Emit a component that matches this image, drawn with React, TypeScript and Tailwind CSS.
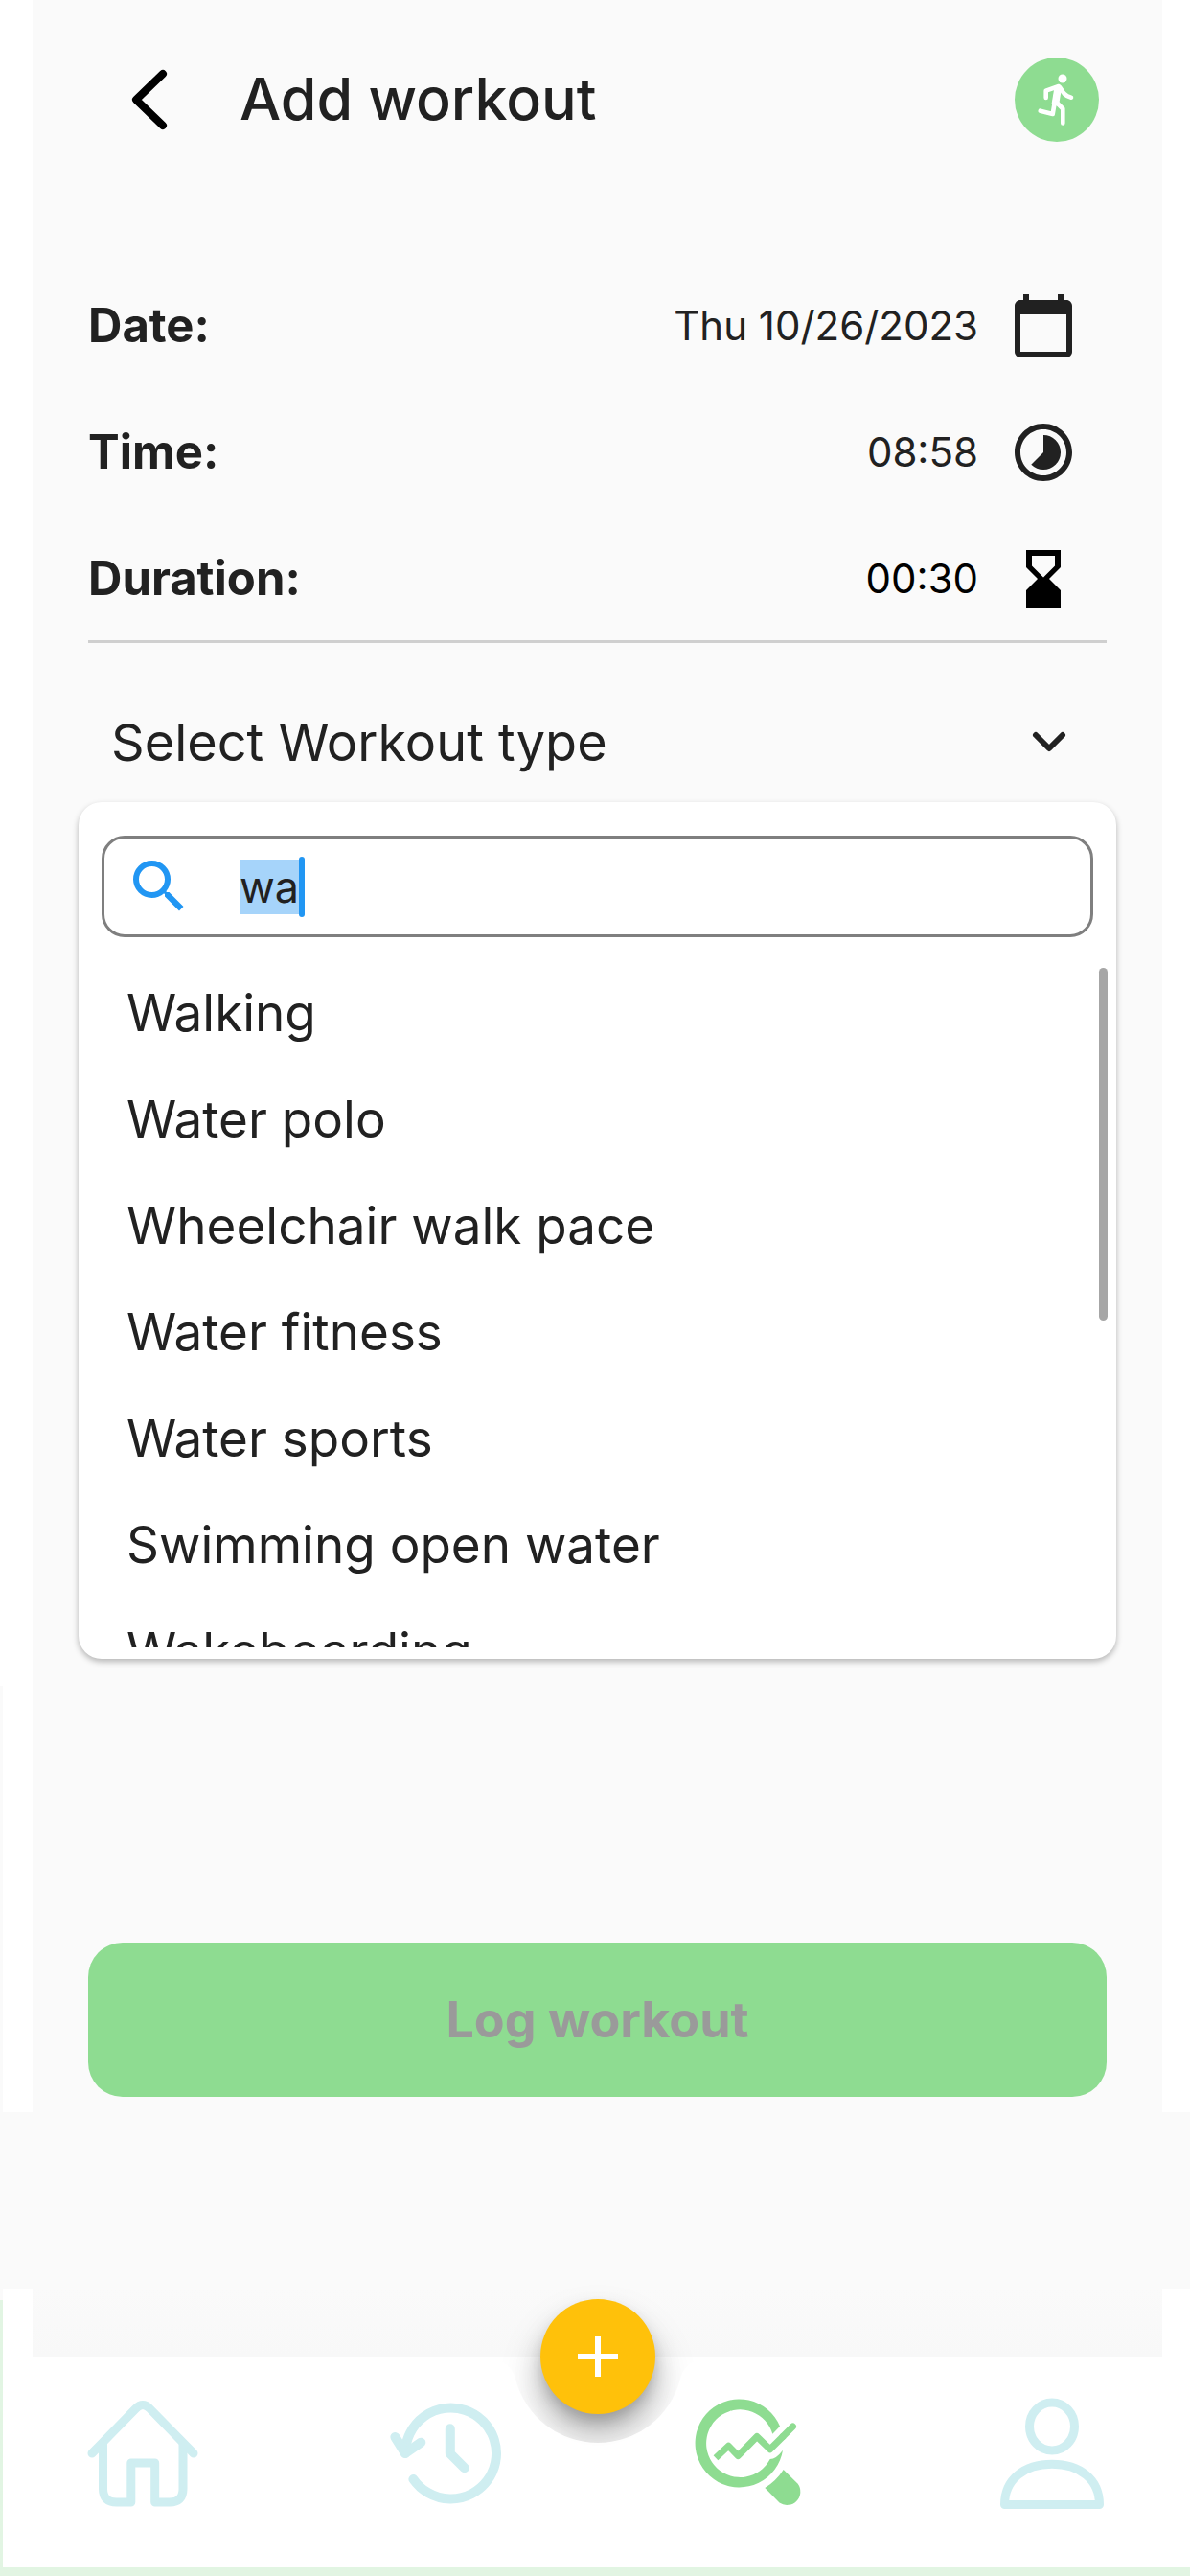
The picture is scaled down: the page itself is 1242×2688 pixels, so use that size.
import React, { useEffect, useRef } from "react";
import {
  MdAdd,
  MdCalendarToday,
  MdHourglassBottom,
  MdSearch,
  MdTimelapse,
} from "react-icons/md";

const workouts = [
  "Walking",
  "Water polo",
  "Wheelchair walk pace",
  "Water fitness",
  "Water sports",
  "Swimming open water",
  "Wakeboarding",
];

interface FieldRowProps {
  label: string;
  value: string;
  icon: React.ReactNode;
  className?: string;
}

const FieldRow: React.FC<FieldRowProps> = ({ label, value, icon, className = "" }) => (
  <div className="flex h-[72px] items-center justify-between pr-[30px]">
    <span className="text-[49px] font-bold">{label}</span>
    <button
      type="button"
      aria-label={`${label} ${value}`}
      className={`flex items-center gap-8 text-[42px] leading-[48px] ${className}`}
    >
      {value}
      {icon}
    </button>
  </div>
);

const BackIcon = () => (
  <svg viewBox="0 0 72 72" className="size-[72px]" fill="none" stroke="#000" strokeWidth="8" strokeLinecap="round" strokeLinejoin="round">
    <path d="M52 9L24 36l28 27" />
  </svg>
);

const ChevronIcon = () => (
  <svg viewBox="0 0 72 72" className="size-[72px]" fill="none" stroke="#212121" strokeWidth="6" strokeLinecap="round" strokeLinejoin="round">
    <path d="M22 29l14 14 14-14" />
  </svg>
);

const RunnerIcon = () => (
  <svg viewBox="0 0 88 88" className="size-[88px]" fill="none" stroke="#fff" strokeWidth="4.6" strokeLinecap="round" strokeLinejoin="round">
    <circle cx="50" cy="22" r="4.5" fill="#fff" stroke="none" />
    <path d="M32.7 42v-7.3L46 30c2 1 3 5 6 8 2 2 4 3 7 3.7" />
    <path d="M44.5 31L39.7 59l-13-3.3" />
    <path d="M43.5 33h3l-2.5 15h-3z" fill="#fff" />
    <path d="M43.3 46.5l7 7v15" />
  </svg>
);

const HomeIcon = () => (
  <svg viewBox="0 0 120 120" className="size-[120px]" fill="none" stroke="#cfeef1" strokeWidth="9" strokeLinecap="round" strokeLinejoin="round">
    <path d="M6 60L51.5 13.5Q59 5.7 66.5 13.5L112 60" />
    <path d="M17.5 50v47q0 14 14 14h15.3V70h24.9v41H87q14 0 14-14V50" />
  </svg>
);

const HistoryIcon = () => (
  <svg viewBox="0 0 120 120" className="size-[120px]" fill="none" stroke="#cfeef1" strokeWidth="10" strokeLinecap="round" strokeLinejoin="round">
    <path d="M17 60A47.5 47.5 0 1 1 25.4 87" />
    <path d="M6.4 43L17 60l16.3-11.3" />
    <path d="M63.8 34.3v26l15 15" />
  </svg>
);

const AnalyzeIcon = () => (
  <svg viewBox="0 0 120 120" className="size-[120px]" fill="#8edc91">
    <path d="M92 31.7L84.3 39.7A35.3 35.3 0 1 0 81.7 66Q88 66 95 56.7A46 46 0 1 1 92 31.7Z" />
    <path d="M95.7 77L110.7 91.7A14 14 0 0 1 91.5 111.5L76.3 96Q88 89 95.7 77Z" />
    <path
      d="M25 64.7L38.3 52.3 48.3 62.5 68 42.5 81.7 55.8 96 41.5"
      fill="none"
      stroke="#8edc91"
      strokeWidth="7"
      strokeLinejoin="round"
    />
    <path d="M95 42.5L105.5 32" stroke="#8edc91" strokeWidth="7" strokeLinecap="round" />
  </svg>
);

const ProfileIcon = () => (
  <svg viewBox="0 0 120 120" className="size-[120px]" fill="none" stroke="#cfeef1" strokeWidth="9" strokeLinejoin="round">
    <ellipse cx="60" cy="32" rx="23.5" ry="25" />
    <path d="M10.5 113.5C10.5 87 31 71.3 60 71.3S109.5 87 109.5 113.5Z" />
  </svg>
);

// Shadow of the add button, cut off at the notch in the bar
const NotchShadow = () => (
  <svg viewBox="0 0 310 220" className="pointer-events-none absolute -top-[79px] left-1/2 h-[220px] w-[310px] -translate-x-1/2">
    <defs>
      <clipPath id="notch">
        <path d="M0 0H310V79H285C258 79 244 88 241 103A89 89 0 0 1 69 103C66 88 52 79 25 79H0Z" />
      </clipPath>
      <filter id="near" x="-50%" y="-50%" width="200%" height="200%">
        <feGaussianBlur stdDeviation="7.5" />
      </filter>
      <filter id="mid" x="-50%" y="-50%" width="200%" height="200%">
        <feGaussianBlur stdDeviation="15" />
      </filter>
      <filter id="far" x="-80%" y="-80%" width="260%" height="260%">
        <feGaussianBlur stdDeviation="22" />
      </filter>
    </defs>
    <circle cx="155" cy="94" r="60" filter="url(#mid)" opacity="0.04" />
    <g clipPath="url(#notch)">
      <circle cx="155" cy="88" r="57" filter="url(#near)" opacity="0.18" />
      <circle cx="155" cy="98" r="60" filter="url(#mid)" opacity="0.14" />
      <circle cx="155" cy="106" r="66" filter="url(#far)" opacity="0.13" />
    </g>
  </svg>
);

export default function App() {
  const searchRef = useRef<HTMLInputElement>(null);

  useEffect(() => {
    // Preselect the query so typing replaces it
    searchRef.current?.focus();
    searchRef.current?.select();
  }, []);

  return (
    <div className="relative bg-white font-['Inter','Liberation_Sans',sans-serif] text-[#212121]">
      <main className="mr-[29px] ml-[34px] bg-[#fafafa] px-[58px] pb-4">
        <header className="flex h-[208px] items-center pr-2 pl-[26px]">
          <button type="button" aria-label="Back">
            <BackIcon />
          </button>
          <h1 className="ml-[60px] flex-1 text-[61px] font-medium">Add workout</h1>
          <button type="button" aria-label="Workouts" className="rounded-full bg-[#8edc91]">
            <RunnerIcon />
          </button>
        </header>

        <section className="mt-24 flex flex-col gap-[60px] border-b-3 border-[#cfcfcf] pb-7">
          <FieldRow label="Date:" value="Thu 10/26/2023" icon={<MdCalendarToday size={72} />} />
          <FieldRow label="Time:" value="08:58" icon={<MdTimelapse size={72} />} />
          <FieldRow label="Duration:" value="00:30" icon={<MdHourglassBottom size={72} />} className="text-black" />
        </section>

        <button
          type="button"
          aria-expanded="true"
          className="mt-10 flex h-[126px] w-full items-center justify-between px-6 text-[54px]"
        >
          Select Workout type
          <ChevronIcon />
        </button>

        <div className="-mx-[10px] rounded-3xl bg-white pt-[35px] pb-3 shadow-[0_3px_6px_rgba(0,0,0,0.28)]">
          <label className="mx-6 flex h-[106px] items-center rounded-3xl border-3 border-[#7f7f7f] pl-[21px]">
            <MdSearch size={72} color="#2196f3" />
            <input
              ref={searchRef}
              type="text"
              aria-label="Search workout"
              defaultValue="wa"
              className="ml-12 field-sizing-content text-[45px] leading-[57px] caret-transparent outline-none selection:bg-[#a6d4fa] selection:text-[#212121]"
            />
            <span className="h-[63px] w-[6px] rounded-full bg-[#2196f3]" />
          </label>

          <div className="relative mt-6 h-[717px] overflow-hidden">
            <ul>
              {workouts.map((name) => (
                <li key={name}>
                  <button type="button" className="h-[111px] w-full pl-[50px] text-left text-[53px]">
                    {name}
                  </button>
                </li>
              ))}
            </ul>
            <div className="absolute top-2 right-[9px] h-[368px] w-[9px] rounded-full bg-[#a6a6a6]" />
          </div>
        </div>

        <button
          type="button"
          disabled
          className="mt-[296px] h-[161px] w-full rounded-[36px] bg-[#8edc91] text-[52px] font-bold text-[#9a9a9a]"
        >
          Log workout
        </button>
      </main>

      <div className="h-[184px] bg-[#fafafa]" />
      <div className="mr-[29px] ml-[34px] h-[71px] bg-linear-to-b from-[#fafafa] to-[#f8f8f8]" />

      <nav className="relative border-b-9 border-[#e2f5e3] bg-white">
        <div className="flex justify-between pt-[41px] pr-[84px] pb-[59px] pl-[90px]">
          <a href="#home" aria-label="Home">
            <HomeIcon />
          </a>
          <a href="#history" aria-label="History">
            <HistoryIcon />
          </a>
          <a href="#analyze" aria-label="Analyze">
            <AnalyzeIcon />
          </a>
          <a href="#profile" aria-label="Profile">
            <ProfileIcon />
          </a>
        </div>
        <div className="absolute top-0 right-[29px] left-[34px]">
          <NotchShadow />
          <button
            type="button"
            aria-label="Add"
            className="absolute -top-[60px] left-1/2 flex size-[120px] -translate-x-1/2 items-center justify-center rounded-full bg-[#ffc10a] text-white"
          >
            <MdAdd size={72} />
          </button>
        </div>
      </nav>

      {/* left edge of the screen behind */}
      <div className="absolute bottom-[288px] left-0 h-[641px] w-[3px] bg-[#fafafa]" />
      <div className="absolute bottom-0 left-0 h-[288px] w-[3px] bg-[#e2f5e3]" />
    </div>
  );
}
